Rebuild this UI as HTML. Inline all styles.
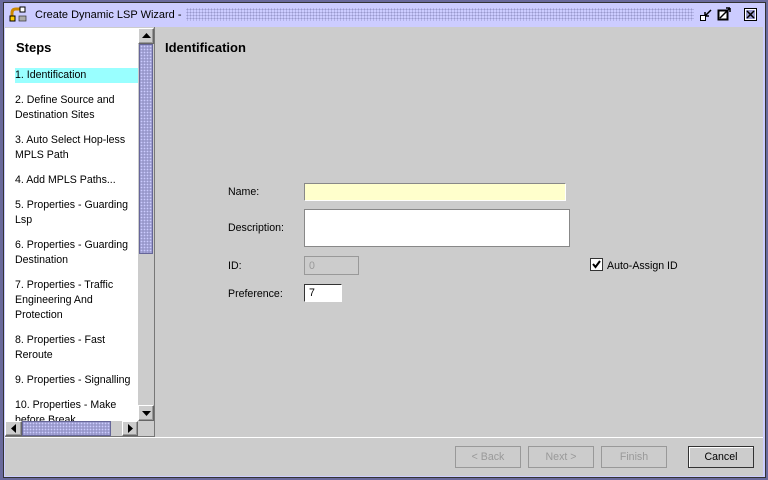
<!DOCTYPE html>
<html><head><style>
*{margin:0;padding:0;box-sizing:border-box}
body{width:768px;height:480px;background:#6a6a9c;position:relative;overflow:hidden;font-family:"Liberation Sans",sans-serif;font-size:10.6px;color:#000}
.a{position:absolute}
.dots{background-color:#ccccff;background-image:radial-gradient(#9999cc 0.8px,transparent 0.9px);background-size:3px 3px}
.thumb{background-color:#9999cc;background-image:radial-gradient(#ccccff 0.7px,transparent 0.9px);background-size:3px 3px;border:1px solid #666699}
.btn{position:absolute;border:1px solid #999;color:#999;text-align:center;line-height:20px;font-size:10.6px}
.sb{position:absolute;background:#ccc;border:1px solid #666;border-top-color:#fff;border-left-color:#fff;box-shadow:inset -1px -1px #999}
.st{position:absolute;left:10px;line-height:15px;font-size:10.6px}
.lbl{position:absolute;font-size:10.6px}
</style></head><body>
<div class="a" style="left:3px;top:2px;width:763px;height:476px;background:#ccccff;border:1px solid #333"></div>
<div class="a dots" style="left:186px;top:8px;width:508px;height:13px"></div>
<svg class="a" style="left:9px;top:6px" width="18" height="16"><path d="M3 12 L3 7 Q3 3 7 3 L11 3" stroke="#cc8800" stroke-width="3" fill="none"/><rect x="1" y="10" width="5" height="5" fill="#ffcc00" stroke="#000"/><rect x="11" y="1" width="5" height="5" fill="#fff" stroke="#000"/><rect x="10" y="10" width="7" height="5" fill="#aaa" stroke="#333" stroke-width=".7"/></svg>
<div class="a" style="left:35px;top:9px;font-size:11px">Create Dynamic LSP Wizard -</div>
<svg class="a" style="left:699px;top:7px" width="70" height="16"><rect x="1.5" y="8.5" width="5" height="5" fill="#fff" stroke="#000"/><path d="M6 9 L12 3 M6 9 L6 5 M6 9 L10 9" stroke="#000" stroke-width="1.5" fill="none"/><rect x="19.5" y="3.5" width="9" height="9" fill="#fff" stroke="#000" stroke-width="2"/><path d="M21 11 L31 1 M31 1 L27 1 M31 1 L31 5" stroke="#000" stroke-width="1.5" fill="none"/><rect x="45.5" y="1.5" width="12" height="12" fill="#fff" stroke="#000"/><rect x="47" y="3" width="9" height="9" fill="#9999cc"/><path d="M48 4 L55 11 M55 4 L48 11" stroke="#000" stroke-width="1.5"/></svg>
<div class="a" style="left:5px;top:27px;width:758px;height:449px;background:#ccc"></div>
<div class="a" style="left:5px;top:28px;width:133px;height:393px;background:#fff;overflow:hidden">
<div class="a" style="left:11px;top:12px;font-weight:bold;font-size:13px">Steps</div>
<div class="a" style="left:10px;top:40px;width:123px;height:15px;background:#99ffff"></div>
<div class="st" style="top:40px">1. Identification</div>
<div class="st" style="top:65px">2. Define Source and<br>Destination Sites</div>
<div class="st" style="top:105px">3. Auto Select Hop-less<br>MPLS Path</div>
<div class="st" style="top:145px">4. Add MPLS Paths...</div>
<div class="st" style="top:170px">5. Properties - Guarding<br>Lsp</div>
<div class="st" style="top:210px">6. Properties - Guarding<br>Destination</div>
<div class="st" style="top:250px">7. Properties - Traffic<br>Engineering And<br>Protection</div>
<div class="st" style="top:305px">8. Properties - Fast<br>Reroute</div>
<div class="st" style="top:345px">9. Properties - Signalling</div>
<div class="st" style="top:370px">10. Properties - Make<br>before Break</div>
</div>
<div class="a" style="left:138px;top:28px;width:16px;height:393px;background:#ccc"></div>
<div class="sb" style="left:138px;top:28px;width:16px;height:16px"></div>
<svg class="a" style="left:142px;top:33px" width="9" height="5"><path d="M0 5 L4.5 0 L9 5Z"/></svg>
<div class="a thumb" style="left:139px;top:44px;width:14px;height:210px"></div>
<div class="sb" style="left:138px;top:405px;width:16px;height:16px"></div>
<svg class="a" style="left:142px;top:411px" width="9" height="5"><path d="M0 0 L4.5 5 L9 0Z"/></svg>
<div class="a" style="left:154px;top:27px;width:1px;height:410px;background:#777"></div>
<div class="a" style="left:5px;top:421px;width:149px;height:15px;background:#ccc"></div>
<div class="sb" style="left:5px;top:421px;width:17px;height:15px"></div>
<svg class="a" style="left:11px;top:424px" width="5" height="9"><path d="M5 0 L0 4.5 L5 9Z"/></svg>
<div class="a thumb" style="left:22px;top:421px;width:89px;height:15px"></div>
<div class="sb" style="left:122px;top:421px;width:16px;height:15px"></div>
<svg class="a" style="left:128px;top:424px" width="5" height="9"><path d="M0 0 L5 4.5 L0 9Z"/></svg>
<div class="a" style="left:5px;top:436px;width:150px;height:1px;background:#777"></div>
<div class="a" style="left:5px;top:437px;width:758px;height:1px;background:#fff"></div>
<div class="a" style="left:165px;top:40px;font-weight:bold;font-size:13px">Identification</div>
<div class="lbl" style="left:228px;top:186px">Name:</div>
<div class="a" style="left:304px;top:183px;width:262px;height:18px;background:#ffffcc;border:1px solid #888;border-right-color:#fff;border-bottom-color:#fff"></div>
<div class="lbl" style="left:228px;top:222px">Description:</div>
<div class="a" style="left:304px;top:209px;width:266px;height:38px;background:#fff;border:1px solid #888"></div>
<div class="lbl" style="left:228px;top:260px">ID:</div>
<div class="a" style="left:304px;top:256px;width:55px;height:19px;border:1px solid #999;color:#999;padding:3px 0 0 4px">0</div>
<div class="a" style="left:590px;top:258px;width:13px;height:13px;background:#fff;border:1px solid #333"></div>
<svg class="a" style="left:591px;top:259px" width="11" height="11"><path d="M2 5 L4.5 8 L9 2" stroke="#000" stroke-width="2" fill="none"/></svg>
<div class="lbl" style="left:607px;top:260px">Auto-Assign ID</div>
<div class="lbl" style="left:228px;top:288px">Preference:</div>
<div class="a" style="left:304px;top:284px;width:38px;height:18px;background:#fff;border:1px solid #333;border-right-color:#fff;border-bottom-color:#fff;padding:2px 0 0 4px">7</div>
<div class="btn" style="left:455px;top:446px;width:66px;height:22px">&lt; Back</div>
<div class="btn" style="left:528px;top:446px;width:66px;height:22px">Next &gt;</div>
<div class="btn" style="left:601px;top:446px;width:66px;height:22px">Finish</div>
<div class="btn" style="left:688px;top:446px;width:66px;height:22px;color:#000;border-color:#333;box-shadow:inset 1px 1px #fff">Cancel</div>
</body></html>
